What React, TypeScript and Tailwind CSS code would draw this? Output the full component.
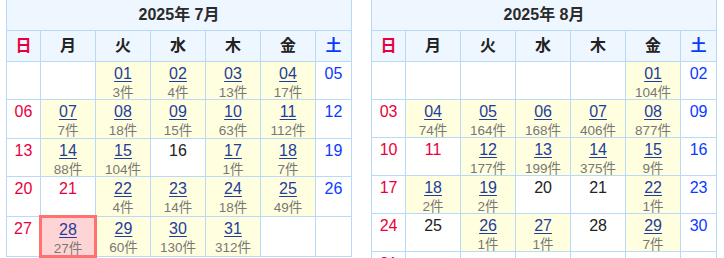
import React from "react";

type Month = {
  title: string;
  startDow: number;
  days: number;
  holidays: number[];
  counts: Record<number, number>;
  today?: number;
};

const MONTHS: Month[] = [
  {
    title: "2025年 7月",
    startDow: 2,
    days: 31,
    holidays: [21],
    today: 28,
    counts: {
      1: 3, 2: 4, 3: 13, 4: 17, 7: 7, 8: 18, 9: 15, 10: 63, 11: 112,
      14: 88, 15: 104, 17: 1, 18: 7, 22: 4, 23: 14, 24: 18, 25: 49,
      28: 27, 29: 60, 30: 130, 31: 312,
    },
  },
  {
    title: "2025年 8月",
    startDow: 5,
    days: 31,
    holidays: [11],
    counts: {
      1: 104, 4: 74, 5: 164, 6: 168, 7: 406, 8: 877, 12: 177, 13: 199,
      14: 375, 15: 9, 18: 2, 19: 2, 22: 1, 26: 1, 27: 1, 29: 7,
    },
  },
];

const WEEKDAYS = ["日", "月", "火", "水", "木", "金", "土"];
const COL_WIDTHS = [34, 55, 55, 55, 55, 55, 36];

function pad(n: number): string {
  return n < 10 ? `0${n}` : `${n}`;
}

function buildWeeks(m: Month): (number | null)[][] {
  const cells: (number | null)[] = [];
  for (let i = 0; i < m.startDow; i++) cells.push(null);
  for (let d = 1; d <= m.days; d++) cells.push(d);
  while (cells.length % 7 !== 0) cells.push(null);
  const weeks: (number | null)[][] = [];
  for (let i = 0; i < cells.length; i += 7) weeks.push(cells.slice(i, i + 7));
  return weeks;
}

function DayCell({ day, dow, month }: { day: number | null; dow: number; month: Month }) {
  if (day === null) {
    return <td className="border border-[#b9d9f9] bg-white" />;
  }
  const count = month.counts[day];
  const isToday = month.today === day;
  const isRed = dow === 0 || month.holidays.includes(day);
  const isBlue = dow === 6;

  let numColor = "text-[#222]";
  if (isRed) numColor = "text-[#e8003c]";
  else if (isBlue) numColor = "text-[#0a3cff]";

  let bg = "bg-white";
  if (count) bg = "bg-[#ffffdf]";
  if (isToday) bg = "bg-[#ffd4d4]";

  return (
    <td
      className={`${bg} align-top text-center ${
        isToday ? "border-[3px] border-[#ff7272]" : "border border-[#b9d9f9]"
      }`}
    >
      <div className="h-[37px] pt-[2px]">
        {count ? (
          <>
            <a href="#" className="block text-[16px] leading-[19px] text-[#1f3d9e] underline underline-offset-2">
              {pad(day)}
            </a>
            <div className="mt-[2px] text-[13.5px] leading-[15px] text-[#777]">{count}件</div>
          </>
        ) : (
          <div className={`text-[16px] leading-[19px] ${numColor}`}>{pad(day)}</div>
        )}
      </div>
    </td>
  );
}

function MonthTable({ month }: { month: Month }) {
  const weeks = buildWeeks(month);
  return (
    <table className="table-fixed border-collapse w-[346px] mt-[-1px]">
      <colgroup>
        {COL_WIDTHS.map((w, i) => (
          <col key={i} style={{ width: w }} />
        ))}
      </colgroup>
      <thead>
        <tr>
          <th
            colSpan={7}
            className="h-[31px] border border-[#b9d9f9] bg-[#eef6ff] text-[16px] font-bold text-[#2a2a2a]"
          >
            {month.title}
          </th>
        </tr>
        <tr>
          {WEEKDAYS.map((w, i) => (
            <th
              key={w}
              className={`h-[31px] border border-[#b9d9f9] bg-[#eef6ff] text-[16px] font-bold ${
                i === 0 ? "text-[#e8003c]" : i === 6 ? "text-[#0a3cff]" : "text-[#222]"
              }`}
            >
              {w}
            </th>
          ))}
        </tr>
      </thead>
      <tbody>
        {weeks.map((week, wi) => (
          <tr key={wi}>
            {week.map((day, di) => (
              <DayCell key={di} day={day} dow={di} month={month} />
            ))}
          </tr>
        ))}
      </tbody>
    </table>
  );
}

export default function App() {
  return (
    <div
      className="w-[724px] h-[258px] overflow-hidden bg-white flex gap-[19px] pl-[6px]"
      style={{ fontFamily: '"Liberation Sans", "Noto Sans CJK JP", sans-serif' }}
    >
      {MONTHS.map((m) => (
        <MonthTable key={m.title} month={m} />
      ))}
    </div>
  );
}
